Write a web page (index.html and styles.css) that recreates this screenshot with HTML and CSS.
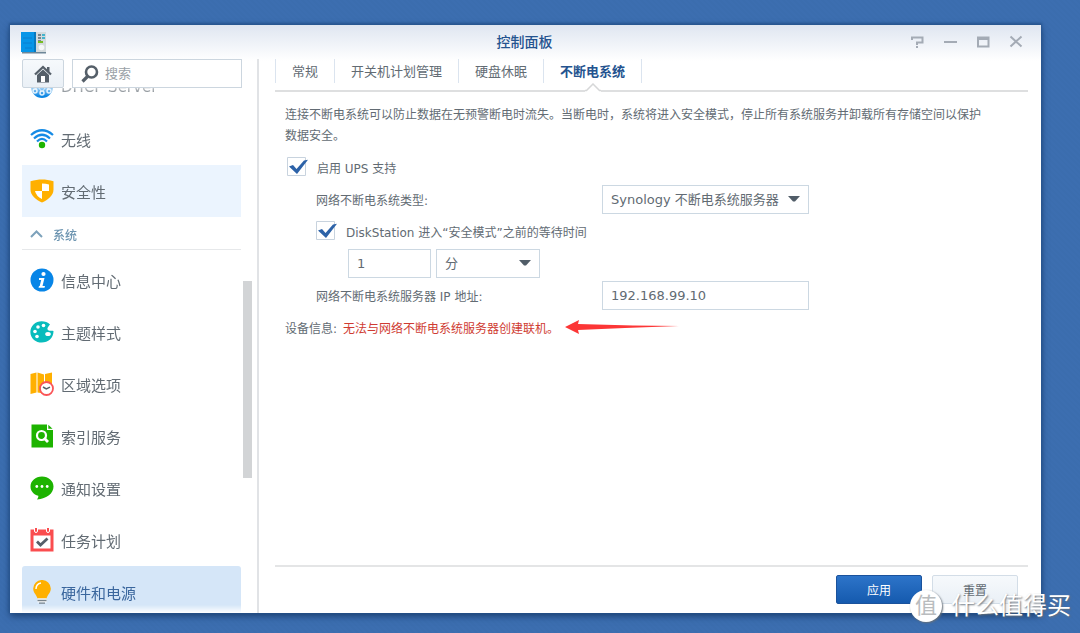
FILE: index.html
```
<!DOCTYPE html>
<html lang="zh-CN">
<head>
<meta charset="utf-8">
<title>控制面板</title>
<link rel="stylesheet" href="styles.css">
</head>
<body>
<main class="window">
  <header class="titlebar">
    <svg class="app-icon" viewBox="0 0 26 23" width="26" height="23" aria-hidden="true">
      <path d="M14 1h11v21H14z" fill="#d3dadd"/><path d="M1 21h24v1.500H1z" fill="#6e8798"/>
      <path d="M0 1h15v20H0z" fill="#0695e8"/><path d="M13 1h2v20h-2z" fill="#0878bd"/>
      <path d="M2 7h9M2 12h9M4 17h7" stroke="#087fd0"/>
      <path d="M17 4h3M17 7h3M17 10h3" stroke="#5d6a70" stroke-width="1.500"/>
      <path d="M21 4h3M21 7h3" stroke="#17a5c7" stroke-width="1.500"/><path d="M17 11h5" stroke="#76bd22" stroke-width="2"/>
      <circle cx="20.500" cy="16.500" r="2.800" fill="#f5f7f8"/>
    </svg>
    <h1 class="title">控制面板</h1>
    <div class="controls">
      <button class="control" type="button" aria-label="帮助"><svg viewBox="0 0 14 14" width="14" height="14"><path d="M2 5V2.500h10.500v5H7V10M7 11v2" fill="none" stroke="currentColor" stroke-width="2"/></svg></button>
      <button class="control" type="button" aria-label="最小化"><svg viewBox="0 0 14 14" width="14" height="14"><path d="M1 7h13" stroke="currentColor" stroke-width="2"/></svg></button>
      <button class="control" type="button" aria-label="最大化"><svg viewBox="0 0 14 14" width="14" height="14"><path d="M2 2.500h10.500v9H2zM2 4h10" fill="none" stroke="currentColor" stroke-width="2"/></svg></button>
      <button class="control" type="button" aria-label="关闭"><svg viewBox="0 0 14 14" width="14" height="14"><path d="M1.500 1.500l11 10M12.500 1.500l-11 10" stroke="currentColor" stroke-width="2"/></svg></button>
    </div>
  </header>
  <div class="body">
    <aside class="sidebar">
      <div class="tools">
        <button class="home" type="button" aria-label="主页"><svg viewBox="0 0 18 18" width="18" height="18"><path d="M1 9.500L9 2l8 7.500" fill="none" stroke="#555f69" stroke-width="2.300"/><path d="M13 2h2.500v5L13 5zM3 10l6-5.500 6 5.500v7.500H3z" fill="#555f69"/><path d="M7 11h4v6H7z" fill="#fff"/></svg></button>
        <label class="search">
          <svg viewBox="0 0 18 18" width="18" height="18" aria-hidden="true"><circle cx="10.500" cy="7" r="5.500" fill="none" stroke="#555f69" stroke-width="2.600"/><path d="M6.500 11.500L1.500 16.500" stroke="#555f69" stroke-width="3.200"/></svg>
          <input type="search" placeholder="搜索" aria-label="搜索">
        </label>
      </div>
      <nav class="nav">
        <div class="nav-list">
          <a class="item" href="#dhcp"><svg viewBox="0 0 24 24" width="24" height="24"><circle cx="12" cy="12" r="11" fill="#0d86e3"/><path d="M4 15l4-3 4 5 4-5 4 3" fill="none" stroke="#bfe0fa"/><g fill="#0d86e3" stroke="#d9eefe" stroke-width="1.500"><circle cx="5" cy="16" r="2"/><circle cx="12" cy="18" r="2"/><circle cx="19" cy="16" r="2"/></g></svg>DHCP Server</a>
          <a class="item" href="#wireless"><svg viewBox="0 0 24 24" width="24" height="24"><g fill="none" stroke="#168be5" stroke-width="2.200"><path d="M1 8Q12-1.500 23 8M4 11.500Q12 4 20 11.500M7 14.500Q12 9.500 17 14.500"/></g><circle cx="12" cy="18" r="3.200" fill="#1db300"/></svg>无线</a>
          <a class="item hover" href="#security"><svg viewBox="0 0 24 24" width="24" height="24"><path d="M12 .5c3.500 0 7.500.6 11.500 1.800v8.200c0 6-5.500 10.500-11.500 13-6-2.500-11.500-7-11.500-13V2.300C4.500 1.100 8.500.5 12 .5z" fill="#ffb000"/><path d="M12 4.500q4 0 7 1V12h-7zM5 12h7v8q-6-3-7-8z" fill="#fff"/></svg>安全性</a>
          <button class="group" type="button"><svg viewBox="0 0 13 8" width="13" height="8"><path d="M1 7l5.500-5.500L12 7" fill="none" stroke="#7da2bb" stroke-width="2"/></svg>系统</button>
          <a class="item" href="#info"><svg viewBox="0 0 24 24" width="24" height="24"><circle cx="12" cy="12" r="11.500" fill="#0785e7"/><circle cx="13.500" cy="6" r="2.100" fill="#fff"/><path d="M9 10h5.500l-2 8h2.500l-.5 1.800H8.500L9 18h.7l1.500-6H9z" fill="#fff"/></svg>信息中心</a>
          <a class="item" href="#theme"><svg viewBox="0 0 24 24" width="24" height="24"><path d="M20 4.500C16 .5 8 0 3.500 4.500-1 9-.5 16 4 20c4 3.500 12 3.500 16-.5 2.300-2 3.500-5 3.500-8.500-2-.8-3.800.2-5.300-.8-2-1.500.3-3.700 1.800-5.700z" fill="#08bcbc"/><g fill="#fff"><circle cx="5" cy="11.500" r="1.800"/><circle cx="8" cy="7" r="1.800"/><circle cx="13.500" cy="5.500" r="1.800"/><circle cx="7" cy="16.500" r="1.800"/><ellipse cx="18" cy="14" rx="2.800" ry="2"/></g></svg>主题样式</a>
          <a class="item" href="#region"><svg viewBox="0 0 24 24" width="24" height="24"><path d="M.5 2l6-1.500v20L.5 22zM7.500 .5l6.500 2v19l-6.500-1zM15 2L22 .5v18l-7 1z" fill="#ffb000"/><circle cx="16.500" cy="16.500" r="6.500" fill="#fff" stroke="#fa5457" stroke-width="1.800"/><path d="M13 15l3.300 2 3.700-1.800" fill="none" stroke="#555f69" stroke-width="1.500"/></svg>区域选项</a>
          <a class="item" href="#index"><svg viewBox="0 0 24 24" width="24" height="24"><path d="M1.500 .5H17V6h6v17.500H1.500z" fill="#1db300"/><path d="M18.300 .8l4.200 4h-4.200z" fill="#1db300"/><circle cx="11.500" cy="11.500" r="4.500" fill="none" stroke="#fff" stroke-width="2.200"/><path d="M14 14l4 4" stroke="#fff" stroke-width="2.800"/></svg>索引服务</a>
          <a class="item" href="#notice"><svg viewBox="0 0 24 24" width="24" height="24"><path d="M12 .5c6.500 0 11.500 4.500 11.500 10 0 7-6.500 12-16.500 13 1-1.500 1.500-2.500 1.300-3.800C3.500 18.500.5 15 .5 10.500.5 5 5.500.5 12 .5z" fill="#1db300"/><g fill="#fff"><circle cx="6.800" cy="10.500" r="1.400"/><circle cx="12" cy="10.500" r="1.400"/><circle cx="17.200" cy="10.500" r="1.400"/></g></svg>通知设置</a>
          <a class="item" href="#task"><svg viewBox="0 0 24 24" width="24" height="24"><path d="M.5 1.500h23v22H.5z" fill="#fa4d4f"/><path d="M3.500 7.500h17v13h-17z" fill="#fff"/><path d="M4.500 0v3a1.500 1.500 0 003 0V0M16.500 0v3a1.500 1.500 0 003 0V0" fill="#fa4d4f" stroke="#fff"/><path d="M7 13.500l3.500 3.500 7-6.500" fill="none" stroke="#555f69" stroke-width="2.800"/></svg>任务计划</a>
          <a class="item selected" href="#hardware"><svg viewBox="0 0 24 24" width="24" height="24"><path d="M12 0a8.500 8.500 0 018.800 8.500c0 4.500-3 5.500-4.300 10h-9c-1.300-4.500-4.300-5.500-4.300-10A8.500 8.500 0 0112 0z" fill="#ffb000"/><path d="M6 9c0-3.500 2-5.500 5-6" fill="none" stroke="#fff" stroke-width="1.500"/><path d="M7.500 18.500h9v4h-9z" fill="#fff"/><path d="M7.500 20.500h9M9 23.200h6" stroke="#77838c" stroke-width="1.300"/></svg>硬件和电源</a>
        </div>
        <div class="scroll-track"><div class="scroll-thumb"></div></div>
      </nav>
    </aside>
    <section class="content">
      <nav class="tabs">
        <a class="tab" href="#general">常规</a>
        <a class="tab" href="#schedule">开关机计划管理</a>
        <a class="tab" href="#hibernate">硬盘休眠</a>
        <a class="tab active" href="#ups">不断电系统<svg class="notch" viewBox="0 0 16 9" width="16" height="9" aria-hidden="true"><path d="M0 7.500h1.500L8 1l6.500 6.500H16V9H0z" fill="#fff"/><path d="M0 7.500h1.500L8 1l6.500 6.500H16" fill="none" stroke="#d6d7d8" stroke-width="1.500"/></svg></a>
      </nav>
      <form class="form">
        <p class="desc">连接不断电系统可以防止数据在无预警断电时流失。当断电时，系统将进入安全模式，停止所有系统服务并卸载所有存储空间以保护数据安全。</p>
        <div class="row first"><input class="check" type="checkbox" id="ups" checked><label for="ups">启用 UPS 支持</label></div>
        <div class="row pair level1"><label for="type">网络不断电系统类型:</label><select class="field" id="type"><option>Synology 不断电系统服务器</option></select></div>
        <div class="row level1"><input class="check" type="checkbox" id="wait" checked><label for="wait">DiskStation 进入“安全模式”之前的等待时间</label></div>
        <div class="row level2"><input class="field amount" type="text" value="1" aria-label="等待时间"><select class="field unit" aria-label="时间单位"><option>分</option></select></div>
        <div class="row pair level1"><label for="ip">网络不断电系统服务器 IP 地址:</label><input class="field" type="text" id="ip" value="192.168.99.10"></div>
        <div class="row status"><span>设备信息:</span><span class="error">无法与网络不断电系统服务器创建联机。</span><svg class="arrow" viewBox="0 0 114 16" width="114" height="16" aria-hidden="true"><path d="M0 8L14 1l-1 4 55 1.500L114 7 60 9 13 11l1 4z" fill="#fc3636"/></svg></div>
      </form>
      <footer class="footer">
        <button class="button primary" type="button">应用</button>
        <button class="button" type="button">重置</button>
      </footer>
    </section>
  </div>
</main>
<div class="watermark"><span class="badge">值</span><span>什么值得买</span></div>
</body>
</html>
```
FILE: styles.css
```
* { box-sizing: border-box; }
body {
  margin: 0;
  height: 100vh;
  padding: 25px 39px 20px 10px;
  background: repeating-linear-gradient(45deg, #3b6dae 0 2px, #3c6eb0 2px 4px);
  font-family: "DejaVu Sans", "Noto Sans CJK SC", sans-serif;
  font-size: 12px;
  color: #626b73;
}
button, input, select { font: inherit; color: inherit; }
button { padding: 0; border: 0; background: none; }
a { color: inherit; text-decoration: none; }
.window {
  display: flex;
  flex-direction: column;
  height: 100%;
  background: linear-gradient(#dfe6f1, #fff 36px);
  box-shadow: 0 -1px 2px 1px #285690, 0 3px 7px #1b3f70;
}
.titlebar {
  display: grid;
  grid-template-columns: 1fr auto 1fr;
  align-items: center;
  flex: none;
  height: 34px;
  padding: 0 13px 0 11px;
}
.title { margin: 0; font-size: 14px; font-weight: 500; line-height: 20px; color: #24538f; }
.controls { display: flex; justify-content: flex-end; gap: 9px; }
.control { display: grid; place-items: center; width: 24px; height: 24px; color: #a4abb5; }
.body { display: flex; flex: 1; min-height: 0; }
.sidebar {
  display: flex;
  flex-direction: column;
  flex: none;
  width: 249px;
  padding-left: 12px;
  border-right: 2px solid #e1e3e6;
}
.tools { display: flex; gap: 8px; flex: none; height: 29px; padding-right: 15px; }
.home { display: grid; place-items: center; width: 42px; border: 1px solid #ccd6df; border-radius: 2px; background: linear-gradient(#f6f9fc, #eaf0f6); }
.search { display: flex; flex: 1; align-items: center; gap: 6px; min-width: 0; padding: 0 8px; border: 1px solid #ccd6df; background: #fff; }
.search svg { flex: none; }
.search input { flex: 1; min-width: 0; padding: 0; border: 0; outline: 0; font-size: 13px; background: none; }
.search input::placeholder { color: #9aa1a7; }
.nav {
  display: flex;
  flex: 1;
  gap: 2px;
  min-height: 0;
  overflow: hidden;
  mask-image: linear-gradient(#0006, #000 8px, #000 calc(100% - 8px), #0000);
}
.nav-list { flex: 1; margin-top: -27px; }
.item { display: flex; align-items: center; gap: 7px; height: 52px; padding-left: 8px; font-size: 15px; white-space: nowrap; }
.item svg { flex: none; }
.hover { background: #ebf4fe; }
.selected { border-radius: 3px; background: #d5e6f8; color: #3a669d; }
.group { display: flex; align-items: center; gap: 10px; width: 100%; height: 33px; margin-bottom: 4px; padding: 2px 8px 0; border-bottom: 1px solid #e6e8ea; font-weight: 500; color: #6c94b0; }
.scroll-track { flex: none; width: 14px; padding-top: 193px; }
.scroll-thumb { width: 9px; height: 197px; background: #d2d4d6; }
.content { display: flex; flex: 1; flex-direction: column; min-width: 0; padding: 0 13px 0 16px; }
.tabs { display: flex; flex: none; height: 33px; padding-bottom: 7px; border-bottom: 2px solid #dedfe0; }
.tab { position: relative; padding: 0 16px; border-left: 1px solid #dbe4ef; font-size: 13px; line-height: 25px; }
.active { border-right: 1px solid #dbe4ef; font-weight: 700; color: #24538f; }
.notch { position: absolute; left: 50%; bottom: -9px; margin-left: -8px; }
.form { flex: 1; padding: 13px 10px 0; }
.desc { margin: 0; padding-right: 32px; line-height: 21px; }
.row { display: flex; align-items: center; gap: 8px; height: 32px; }
.first { margin-top: 4px; padding-left: 2px; }
.level1 { padding-left: 31px; }
.level2 { gap: 5px; padding-left: 63px; }
.pair { display: grid; grid-template-columns: 286px 207px; gap: 0; }
.check {
  appearance: none;
  flex: none;
  width: 22px;
  height: 20px;
  margin: 0;
  background: url("data:image/svg+xml,%3Csvg xmlns='http://www.w3.org/2000/svg' viewBox='0 0 22 20'%3E%3Cpath d='M.5 .5h18v18H.5z' fill='%23fff' stroke='%23c8d3de'/%3E%3C/svg%3E");
}
.check:checked {
  background: url("data:image/svg+xml,%3Csvg xmlns='http://www.w3.org/2000/svg' viewBox='0 0 22 20'%3E%3Cpath d='M.5 .5h18v18H.5z' fill='%23fff' stroke='%23c8d3de'/%3E%3Cpath d='M2 9.5l4-1.500 3.500 4L17 3.500l4-.7L10 17z' fill='%232c62a8'/%3E%3C/svg%3E");
}
.field { width: 100%; height: 29px; padding: 0 8px; border: 1px solid #ccd8e2; border-radius: 0; outline: 0; background: #fff; font-size: 13px; }
select.field {
  appearance: none;
  background: #fff url("data:image/svg+xml,%3Csvg xmlns='http://www.w3.org/2000/svg' width='12' height='6'%3E%3Cpath d='M0 0h12L7 5.500H5z' fill='%23515d68'/%3E%3C/svg%3E") no-repeat right 8px center;
}
.field.amount { width: 83px; }
.field.unit { width: 104px; }
.status { gap: 6px; white-space: nowrap; }
.error { color: #cf3b32; }
.arrow { flex: none; }
.footer { display: flex; flex: none; justify-content: flex-end; gap: 10px; padding: 8px 10px 9px; border-top: 2px solid #e4e5e6; }
.button { width: 86px; height: 29px; border: 1px solid #d3dde7; border-radius: 2px; background: linear-gradient(#f6f9fc, #eaf0f6); }
.primary { border-color: #1a529c; background: linear-gradient(#2d74c9, #155aae); color: #fff; }
.watermark {
  position: absolute;
  right: 9px;
  bottom: 11px;
  display: flex;
  align-items: center;
  gap: 9px;
  font-size: 24px;
  line-height: 32px;
  color: #fff;
  text-shadow: 1px 1px 2px #66707a;
}
.badge { width: 32px; border-radius: 50%; background: #fff; font-size: 22px; text-align: center; color: #b9bcbe; text-shadow: none; box-shadow: 1px 1px 2px #66707a; }
```
